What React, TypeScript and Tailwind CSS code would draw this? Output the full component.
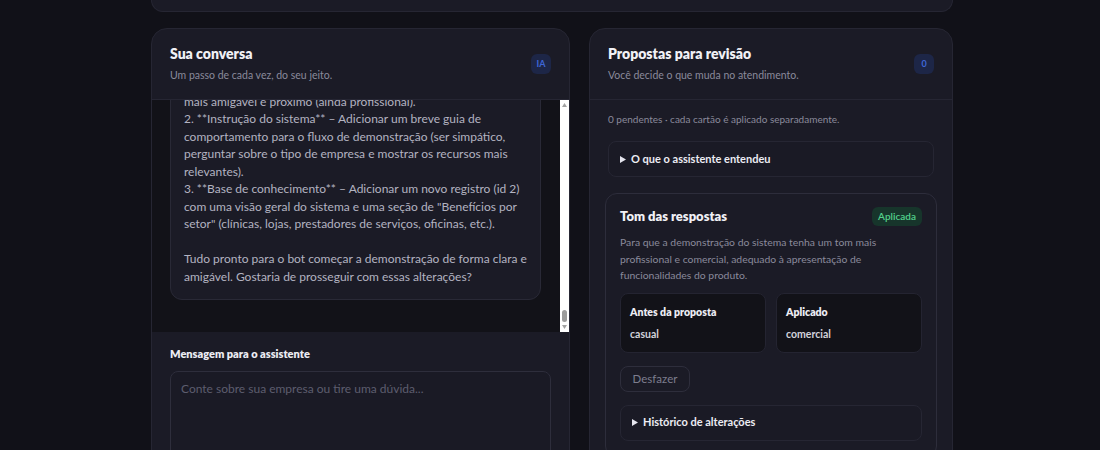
import type { ReactNode } from "react";

const bubbleText = `Perfeito! Preparei três propostas para o seu atendimento:

1. **Tom das respostas** – Ajustar o tom de casual para um estilo
mais amigável e próximo (ainda profissional).
2. **Instrução do sistema** – Adicionar um breve guia de
comportamento para o fluxo de demonstração (ser simpático,
perguntar sobre o tipo de empresa e mostrar os recursos mais
relevantes).
3. **Base de conhecimento** – Adicionar um novo registro (id 2)
com uma visão geral do sistema e uma seção de "Benefícios por
setor" (clínicas, lojas, prestadores de serviços, oficinas, etc.).

Tudo pronto para o bot começar a demonstração de forma clara e
amigável. Gostaria de prosseguir com essas alterações?`;

function Caret() {
  return (
    <svg width="6" height="7" viewBox="0 0 6 7" className="shrink-0">
      <polygon points="0,0 6,3.5 0,7" fill="#e5e5ee" />
    </svg>
  );
}

function Collapsed({ label }: { label: string }) {
  return (
    <div className="flex h-[36px] items-center gap-[5px] rounded-lg border border-[#262633] bg-[#1a1a25] px-[11px]">
      <Caret />
      <span className="text-[11px] font-bold text-[#ececf3]">{label}</span>
    </div>
  );
}

function PanelHeader({
  title,
  subtitle,
  badge,
}: {
  title: string;
  subtitle: string;
  badge: ReactNode;
}) {
  return (
    <div className="flex items-center justify-between border-b border-[#262633] px-[18px] pt-[16px] pb-[17px]">
      <div>
        <h2 className="text-[14px] leading-[18px] font-extrabold text-[#f1f1f6]">{title}</h2>
        <p className="mt-[5px] text-[10.5px] leading-[14px] text-[#8a8a9b]">{subtitle}</p>
      </div>
      <span className="flex h-[20px] w-[20px] items-center justify-center rounded-md bg-[#1d2647] text-[9px] font-bold text-[#3f66d6]">
        {badge}
      </span>
    </div>
  );
}

// light classic scrollbar pinned to the bottom of the thread
function ThreadScrollbar() {
  return (
    <div className="flex w-[9px] flex-col items-center bg-white">
      <svg width="5" height="4" viewBox="0 0 5 4" className="mt-[3px]">
        <polygon points="2.5,0 5,4 0,4" fill="#a3a3a3" />
      </svg>
      <div className="flex-1" />
      <div className="h-[12px] w-[5px] rounded-full bg-[#9c9c9c]" />
      <svg width="5" height="4" viewBox="0 0 5 4" className="mt-[3px] mb-[3px]">
        <polygon points="0,0 5,0 2.5,4" fill="#a3a3a3" />
      </svg>
    </div>
  );
}

function ChatPanel() {
  return (
    <section className="overflow-hidden rounded-2xl border border-[#262633] bg-[#1b1b26]">
      <PanelHeader title="Sua conversa" subtitle="Um passo de cada vez, do seu jeito." badge="IA" />
      <div className="flex h-[232px] bg-[#121218]">
        <div className="flex flex-1 flex-col justify-end overflow-hidden pr-[19px] pb-[32px] pl-[18px]">
          <div className="rounded-xl border border-[#292936] bg-[#1b1b26] px-[13px] pt-[13px] pb-[14px] text-[12px] leading-[17.5px] whitespace-pre-line text-[#b3b3c1]">
            {bubbleText}
          </div>
        </div>
        <ThreadScrollbar />
      </div>
      <div className="px-[18px] pt-[15px] pb-6">
        <label className="block text-[11px] leading-[14px] font-extrabold text-[#ececf3]">
          Mensagem para o assistente
        </label>
        <textarea
          rows={5}
          placeholder="Conte sobre sua empresa ou tire uma dúvida..."
          className="mt-[10px] block w-[381px] resize-none rounded-lg border border-[#2e2e3c] bg-[#1a1a25] px-[10px] py-[8px] text-[12px] text-[#d0d0da] outline-none placeholder:text-[#5d5d6e]"
        />
      </div>
    </section>
  );
}

function ValueBox({ label, value }: { label: string; value: string }) {
  return (
    <div className="rounded-lg border border-[#242431] bg-[#121218] px-[9px] pt-[11px] pb-[11px]">
      <div className="text-[10.5px] leading-[14px] font-extrabold text-[#ececf3]">{label}</div>
      <div className="mt-[8px] text-[10.5px] leading-[14px] font-bold text-[#d2d2dc]">{value}</div>
    </div>
  );
}

function ProposalCard() {
  return (
    <div className="-mx-[3px] mt-4 rounded-xl border border-[#2d2d3b] bg-[#1b1b26] px-[14px] pt-[12px] pb-4">
      <div className="flex items-center justify-between">
        <h3 className="text-[13px] leading-[20px] font-extrabold text-[#f1f1f6]">Tom das respostas</h3>
        <span className="rounded-md bg-[#17352b] px-[6px] py-[3px] text-[10px] leading-[13px] font-semibold text-[#52d08c]">
          Aplicada
        </span>
      </div>
      <p className="mt-[8px] text-[10.4px] leading-[16.5px] text-[#8a8a9b]">
        Para que a demonstração do sistema tenha um tom mais
        <br />
        profissional e comercial, adequado à apresentação de
        <br />
        funcionalidades do produto.
      </p>
      <div className="mt-[9px] grid grid-cols-2 gap-[10px]">
        <ValueBox label="Antes da proposta" value="casual" />
        <ValueBox label="Aplicado" value="comercial" />
      </div>
      <button className="mt-[13px] h-[26px] w-[70px] rounded-lg border border-[#2e2e3c] text-[11.5px] text-[#7d7d8e]">
        Desfazer
      </button>
      <div className="mt-[13px]">
        <Collapsed label="Histórico de alterações" />
      </div>
    </div>
  );
}

function ReviewPanel() {
  return (
    <section className="rounded-2xl border border-[#262633] bg-[#1b1b26]">
      <PanelHeader title="Propostas para revisão" subtitle="Você decide o que muda no atendimento." badge="0" />
      <div className="px-[18px] pt-[11px] pb-6">
        <p className="text-[10px] leading-[16px] text-[#8a8a9b]">
          0 pendentes · cada cartão é aplicado separadamente.
        </p>
        <div className="mt-[14px]">
          <Collapsed label="O que o assistente entendeu" />
        </div>
        <ProposalCard />
      </div>
    </section>
  );
}

export default function App() {
  return (
    <div className="min-h-screen bg-[#111118] font-['Lato',sans-serif]">
      <div className="mx-auto w-[806px] pl-[4px]">
        <div className="h-[12px] rounded-b-2xl border border-t-0 border-[#262633] bg-[#1b1b26]" />
        <div className="mt-4 grid grid-cols-[419px_364px] items-start gap-[19px]">
          <ChatPanel />
          <ReviewPanel />
        </div>
      </div>
    </div>
  );
}
